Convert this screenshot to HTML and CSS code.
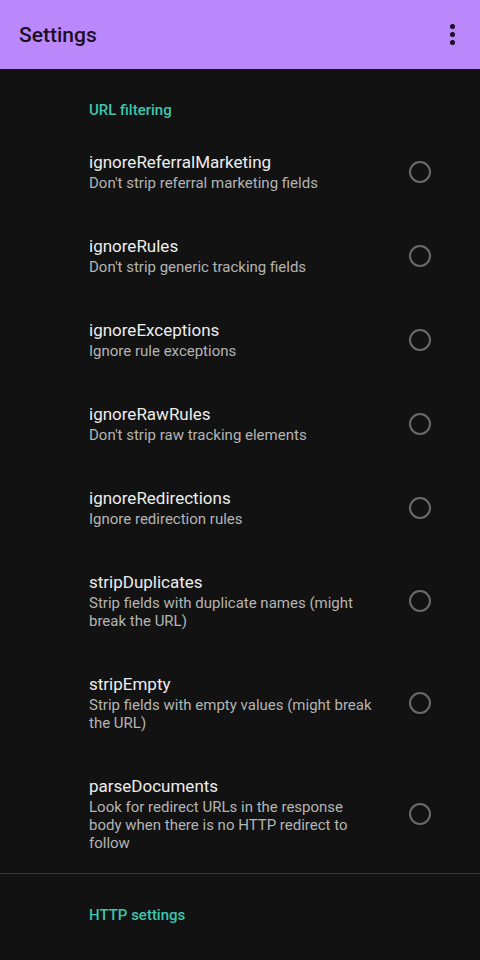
FILE: index.html
```html
<!DOCTYPE html>
<html>
<head>
<meta charset="utf-8">
<link rel="stylesheet" href="styles.css">
</head>
<body>
<header class="appbar">
  <h1 class="appbar-title">Settings</h1>
  <div class="menu" aria-label="More options"><span></span><span></span><span></span></div>
</header>
<main class="prefs">
  <section class="category">
    <h2 class="cat-title">URL filtering</h2>
    <div class="pref">
      <div class="pref-text"><div class="pref-title">ignoreReferralMarketing</div><div class="pref-summary">Don't strip referral marketing fields</div></div>
      <div class="radio"></div>
    </div>
    <div class="pref">
      <div class="pref-text"><div class="pref-title">ignoreRules</div><div class="pref-summary">Don't strip generic tracking fields</div></div>
      <div class="radio"></div>
    </div>
    <div class="pref">
      <div class="pref-text"><div class="pref-title">ignoreExceptions</div><div class="pref-summary">Ignore rule exceptions</div></div>
      <div class="radio"></div>
    </div>
    <div class="pref">
      <div class="pref-text"><div class="pref-title">ignoreRawRules</div><div class="pref-summary">Don't strip raw tracking elements</div></div>
      <div class="radio"></div>
    </div>
    <div class="pref">
      <div class="pref-text"><div class="pref-title">ignoreRedirections</div><div class="pref-summary">Ignore redirection rules</div></div>
      <div class="radio"></div>
    </div>
    <div class="pref">
      <div class="pref-text"><div class="pref-title">stripDuplicates</div><div class="pref-summary">Strip fields with duplicate names (might break the URL)</div></div>
      <div class="radio"></div>
    </div>
    <div class="pref">
      <div class="pref-text"><div class="pref-title">stripEmpty</div><div class="pref-summary">Strip fields with empty values (might break the URL)</div></div>
      <div class="radio"></div>
    </div>
    <div class="pref">
      <div class="pref-text"><div class="pref-title">parseDocuments</div><div class="pref-summary">Look for redirect URLs in the response body when there is no HTTP redirect to follow</div></div>
      <div class="radio"></div>
    </div>
  </section>
  <section class="category divided">
    <h2 class="cat-title">HTTP settings</h2>
  </section>
</main>
</body>
</html>
```
FILE: styles.css
```css
html, body {
  margin: 0;
  padding: 0;
  background: #121212;
  font-family: Roboto, "Noto Sans", sans-serif;
  width: 480px;
  height: 960px;
  overflow: hidden;
}
.appbar {
  height: 69px;
  background: #ba88fb;
  display: flex;
  align-items: center;
  justify-content: space-between;
  padding: 0 19px;
  box-sizing: border-box;
}
.appbar-title {
  margin: 0;
  font-size: 21px;
  font-weight: 500;
  color: #1a0d26;
}
.menu {
  display: flex;
  flex-direction: column;
  gap: 3px;
  margin-right: 6px;
}
.menu span {
  width: 5px;
  height: 5px;
  border-radius: 50%;
  background: #1a0d26;
}
.cat-title {
  margin: 0;
  padding: 32px 0 10px 89px;
  font-size: 15px;
  line-height: 18px;
  font-weight: 500;
  color: #3cc6ae;
}
.divided {
  border-top: 1px solid #3a3a3a;
}
.pref {
  display: flex;
  align-items: center;
  padding: 22px 0 21px 89px;
}
.pref-text {
  width: 290px;
}
.pref-title {
  font-size: 17px;
  line-height: 22px;
  color: #ededed;
}
.pref-summary {
  margin-top: 1px;
  font-size: 15px;
  line-height: 18px;
  color: #b4b4b4;
}
.radio {
  width: 18px;
  height: 18px;
  border: 2.5px solid #6a6a6a;
  border-radius: 50%;
  margin-left: 30px;
}
```
